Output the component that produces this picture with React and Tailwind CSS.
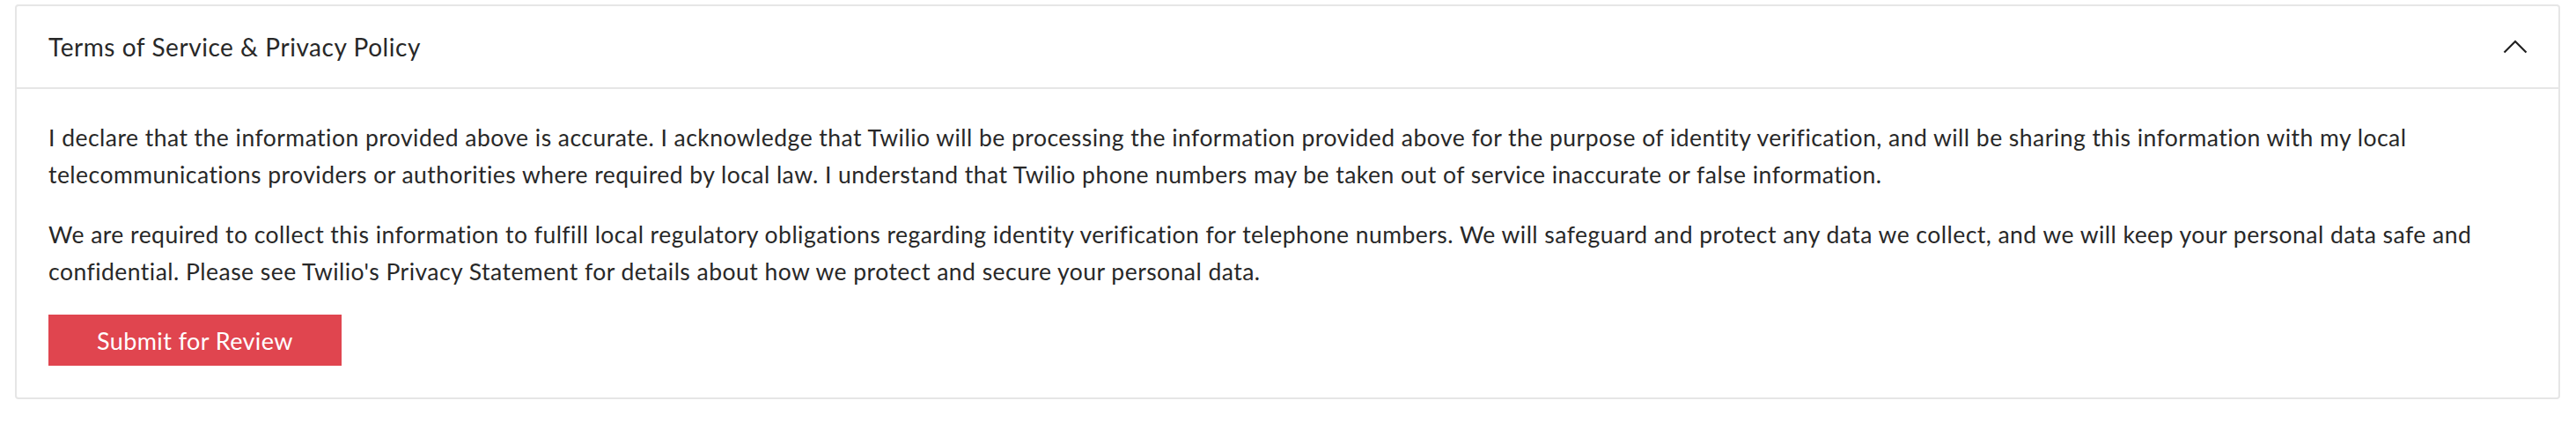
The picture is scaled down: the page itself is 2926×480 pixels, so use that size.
import React from 'react';

const ChevronUp = () => (
  <svg width="28" height="18" viewBox="0 0 28 18" fill="none" className="block">
    <polyline points="1.5,15.5 14,3 26.5,15.5" stroke="#222" strokeWidth="2.2" />
  </svg>
);

const App = () => {
  return (
    <div className="w-[2926px] h-[480px] bg-white pt-[5px] font-['Lato',sans-serif] text-[#282828]">
      <div className="ml-[17px] mr-[18px] border-2 border-[#e6e6e6] rounded-[4px] bg-white">
        {/* Header */}
        <div className="flex items-center justify-between h-[94px] pl-[36px] pr-[35px] border-b-2 border-[#e6e6e6]">
          <h2 className="text-[28px] leading-none font-normal tracking-[0.55px]">Terms of Service &amp; Privacy Policy</h2>
          <ChevronUp />
        </div>

        {/* Body */}
        <div className="px-[36px] pt-[35px] pb-[36px] text-[26.5px] leading-[41.5px] tracking-[0.47px]">
          <p>
            I declare that the information provided above is accurate. I acknowledge that Twilio will be processing the
            information provided above for the purpose of identity verification, and will be sharing this information
            with my local telecommunications providers or authorities where required by local law. I understand that
            Twilio phone numbers may be taken out of service inaccurate or false information.
          </p>
          <p className="mt-[27px]">
            We are required to collect this information to fulfill local regulatory obligations regarding identity
            verification for telephone numbers. We will safeguard and protect any data we collect, and we will keep your
            personal data safe and confidential. Please see Twilio's Privacy Statement for details about how we protect
            and secure your personal data.
          </p>
          <button className="mt-[28px] h-[58px] px-[55px] bg-[#e0454f] text-white text-[27px] leading-none tracking-[0.4px]">
            Submit for Review
          </button>
        </div>
      </div>
    </div>
  );
};

export default App;
